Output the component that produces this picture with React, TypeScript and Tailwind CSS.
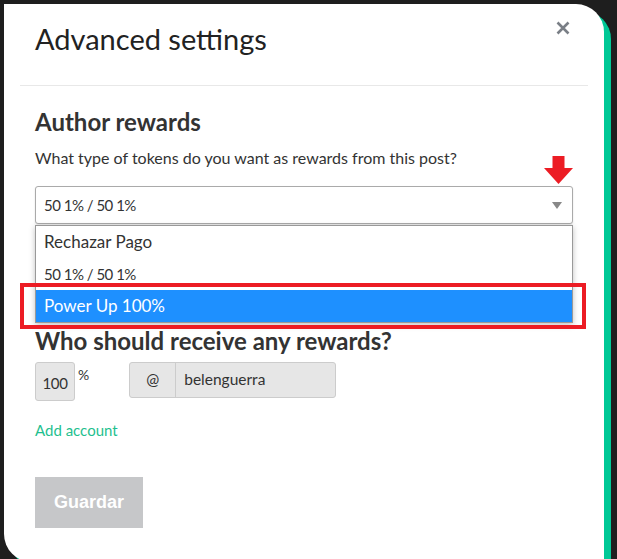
import React from "react";

export default function App() {
  const font = { fontFamily: "Lato, 'Open Sans', sans-serif" };
  return (
    <div className="h-[559px] w-[617px] overflow-hidden bg-[#1e1e1e] pl-[4px] pt-[4px]" style={font}>
      <div className="relative h-[558px] w-[600px] rounded-tr-[28px] rounded-bl-[28px] bg-white shadow-[7px_7px_0_#00c896]">
        <button className="absolute right-[34px] top-[14px] leading-none">
          <svg width="14" height="14" viewBox="0 0 14 14" className="mt-[3px]">
            <path d="M1.5 1.5L12.5 12.5M12.5 1.5L1.5 12.5" stroke="#7a7f86" strokeWidth="2.6" strokeLinecap="butt" />
          </svg>
        </button>
        <div className="px-[31px] pt-[15px]">
          <h1 className="text-[29px] font-normal leading-[40px] text-[#222]">Advanced settings</h1>
        </div>
        <div className="mx-[16px] mt-[26px] h-px bg-[#e8e8e8]" />
        <div className="px-[31px]">
          <h2 className="mt-[21px] text-[24px] font-bold leading-[30px] text-[#333]">Author rewards</h2>
          <p className="mt-[10px] text-[16px] leading-[22px] text-[#333]">What type of tokens do you want as rewards from this post?</p>
          <div className="relative mt-[17px] w-[538px]">
            <svg className="absolute right-[-1px] top-[-31px]" width="31" height="30" viewBox="0 0 31 30">
              <path d="M9.5 1H21.5V13H30L15.5 29L1 13H9.5Z" fill="#ec1c24" />
            </svg>
            <div className="flex h-[38px] items-center justify-between rounded-[3px] border border-[#aaa] bg-white pl-[8px] pr-[10px] text-[15px] tracking-[-0.5px] text-[#333] shadow-[0_1px_2px_rgba(0,0,0,0.12)]">
              <span>50 1% / 50 1%</span>
              <svg width="10" height="7" viewBox="0 0 10 7">
                <path d="M0 0H10L5 7Z" fill="#888" />
              </svg>
            </div>
            <div className="absolute left-0 top-[39px] z-10 w-full border border-[#999] bg-white text-[#333] shadow-[0_2px_6px_rgba(0,0,0,0.25)]">
              <div className="flex h-[32px] items-center pl-[8px] text-[17px]">Rechazar Pago</div>
              <div className="flex h-[32px] items-center pl-[8px] text-[15px] tracking-[-0.5px]">50 1% / 50 1%</div>
              <div className="flex h-[32px] items-center bg-[#1e90ff] pl-[8px] text-[17px] text-white">Power Up 100%</div>
            </div>
            <div className="absolute left-[-15px] top-[97px] z-20 h-[46px] w-[566px] border-[4px] border-[#ec1c24]" />
          </div>
          <div className="h-[102px]" />
          <h2 className="text-[24px] font-bold leading-[30px] text-[#333]">Who should receive any rewards?</h2>
          <div className="mt-[6px] flex items-start">
            <div className="flex h-[39px] w-[40px] items-center justify-center rounded-[3px] border border-[#ccc] bg-[#e6e6e6] pt-[4px] text-[15px] tracking-[-0.3px] text-[#333]">100</div>
            <span className="ml-[3px] mt-[2px] text-[14px] text-[#333]">%</span>
            <div className="ml-[40px] flex h-[36px] w-[207px] rounded-[3px] border border-[#ccc] bg-[#e6e6e6] text-[15.5px] text-[#333]">
              <div className="flex w-[46px] items-center justify-center border-r border-[#ccc]">@</div>
              <div className="flex items-center pl-[8px]">belenguerra</div>
            </div>
          </div>
          <div className="mt-[19px] text-[15px] leading-[20px] text-[#1fbf8f]">Add account</div>
          <button className="mt-[37px] h-[51px] w-[108px] bg-[#c6c7c9] text-[18px] font-bold text-white" style={{ fontFamily: "'Liberation Sans', Arial, sans-serif" }}>
            Guardar
          </button>
        </div>
      </div>
    </div>
  );
}
